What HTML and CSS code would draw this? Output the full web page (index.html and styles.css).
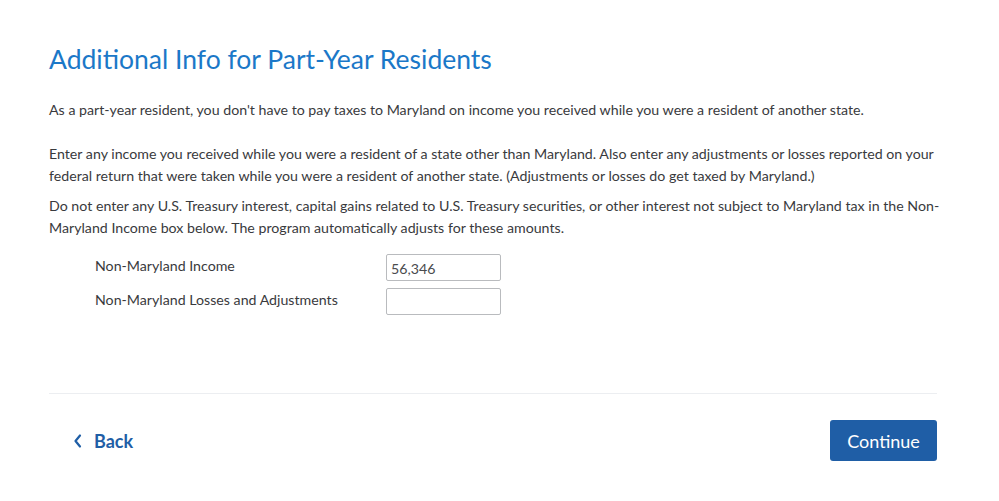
FILE: index.html
```html
<!DOCTYPE html>
<html lang="en">
<head>
    <meta charset="UTF-8">
    <meta name="viewport" content="width=device-width, initial-scale=1.0">
    <title>Additional Info for Part-Year Residents</title>
    <link rel="stylesheet" href="styles.css">
</head>
<body>
    <div class="page">
        <h1 class="title">Additional Info for Part-Year Residents</h1>

        <p class="intro">As a part-year resident, you don't have to pay taxes to Maryland on income you received while you were a resident of another state.</p>

        <p class="info">Enter any income you received while you were a resident of a state other than Maryland. Also enter any adjustments or losses reported on your federal return that were taken while you were a resident of another state. (Adjustments or losses do get taxed by Maryland.)</p>
        <p class="info">Do not enter any U.S. Treasury interest, capital gains related to U.S. Treasury securities, or other interest not subject to Maryland tax in the Non-Maryland Income box below. The program automatically adjusts for these amounts.</p>

        <div class="form">
            <div class="form-row">
                <label class="form-label" for="income">Non-Maryland Income</label>
                <input class="form-input" id="income" type="text" value="56,346">
            </div>
            <div class="form-row">
                <label class="form-label" for="losses">Non-Maryland Losses and Adjustments</label>
                <input class="form-input" id="losses" type="text" value="">
            </div>
        </div>

        <div class="footer">
            <a class="back-link" href="#">
                <svg class="back-icon" width="12" height="16" viewBox="0 0 12 16">
                    <path d="M8 2.5 L3.5 8 L8 13.5" fill="none" stroke="currentColor" stroke-width="2.2" stroke-linecap="round" stroke-linejoin="round"/>
                </svg>
                Back
            </a>
            <button class="btn-continue">Continue</button>
        </div>
    </div>
</body>
</html>
```

FILE: styles.css
```css
/* Base */
body {
    margin: 0;
    font-family: Lato, "Noto Sans", sans-serif;
    color: #393a3d;
    background: #ffffff;
}

.page {
    padding: 38px 62px 0 49px;
}

/* Header & texts */
.title {
    margin: 0 0 19px;
    font-size: 26.5px;
    font-weight: 400;
    line-height: 42px;
    color: #1b78c8;
}

.intro,
.info {
    margin: 0;
    font-size: 14.2px;
    line-height: 22px;
}

.intro { margin-bottom: 22px; }
.info { margin: 0 -8px 8px 0; }

/* Form */
.form {
    display: flex;
    flex-direction: column;
    gap: 7px;
    padding: 7px 0 0 46px;
}

.form-row {
    display: flex;
    align-items: flex-start;
}

.form-label {
    width: 291px;
    padding-top: 1px;
    font-size: 14.2px;
    line-height: 22px;
}

.form-input {
    box-sizing: border-box;
    width: 115px;
    height: 27px;
    margin: 0;
    padding: 2px 4px 0;
    border: 1px solid #b9bbbe;
    border-radius: 2px;
    font-family: inherit;
    font-size: 14.2px;
    color: #4a4b4e;
    outline: none;
}

/* Footer */
.footer {
    display: flex;
    justify-content: space-between;
    align-items: center;
    margin-top: 78px;
    padding-top: 26px;
    border-top: 1px solid #eceef1;
}

.back-link {
    display: flex;
    align-items: center;
    gap: 10px;
    margin-left: 23px;
    font-size: 18px;
    font-weight: 700;
    color: #1f5ea6;
    text-decoration: none;
}

.btn-continue {
    width: 107px;
    height: 41px;
    border: none;
    border-radius: 3px;
    background: #1f5ea6;
    color: #ffffff;
    font-family: inherit;
    font-size: 18px;
    cursor: pointer;
}
```
